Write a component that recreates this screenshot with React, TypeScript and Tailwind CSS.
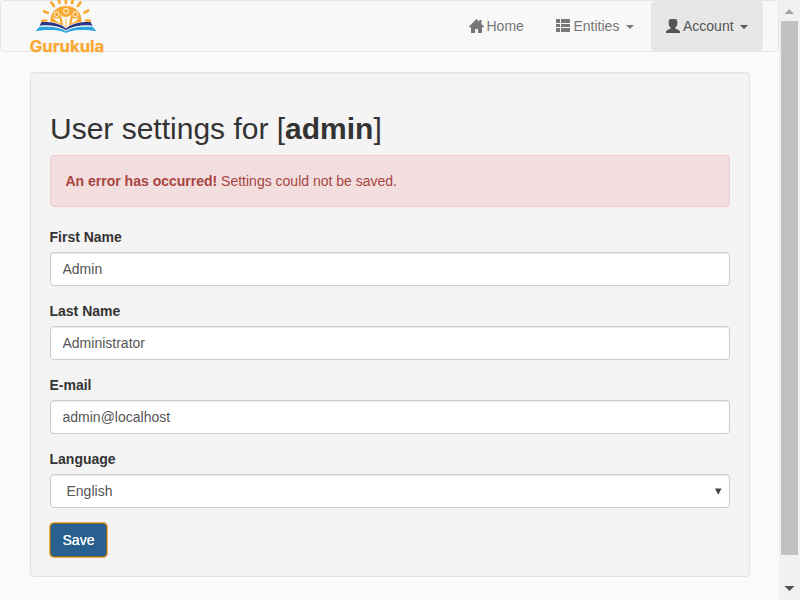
import React from "react";

function Logo() {
  return (
    <svg className="block h-[60px] w-[100px]" viewBox="0 0 100 60">
      <path d="M30.5 22.2 C30 12 37 6 46 6 S62 12 61.500 22.200 C56 22.200 50 24 46 28 C42 24 36 22.200 30.500 22.200Z" fill="#f9a832" />
      <g stroke="#f9a832" strokeWidth="2.600" strokeLinecap="round">
        <path d="M22.300 20.800L26.300 20.500M24 11.300L27.800 13M31.300 2.500L34 6M38.500 -1L39.700 3M45.800 -1V3.300M53.300 -1L52 3M60.500 2.500L57.800 6M68.300 10.500L64.500 12.700M70 20.700L66 20.500" />
      </g>
      <g fill="#fdf8ee">
        <path d="M40.500 14.500Q43 17 46 17Q49 17 51.500 14.500L50 19L49 25.500L46 28.500L43 25.500L42 19Z" />
        <path d="M32.500 16.500Q36 19.500 39.500 18L40.500 23.500L36.500 21.500ZM59.500 16.500Q56 19.500 52.500 18L51.500 23.500L55.500 21.500Z" />
      </g>
      <g fill="#f9a832" stroke="#fdf8ee" strokeWidth="1">
        <circle cx="46" cy="11" r="2.500" />
        <circle cx="36.700" cy="14.200" r="2.500" />
        <circle cx="55.300" cy="14.200" r="2.500" />
      </g>
      <path d="M46 19V28" fill="none" stroke="#f9a832" strokeWidth=".9" />
      <path d="M21.500 22 C31 21.800 41 23.500 46 28.700 C51 23.500 61 21.800 70.500 22 L72.500 25.700 C62 24.800 52 26.500 46 30.700 C40 26.500 30 24.800 19.500 25.700Z" fill="#2b3585" />
      <path d="M19.500 26.700 C31 25.800 41 27.600 46 31 C51 27.600 61 25.800 72.500 26.700 L76.500 31.300 C65 29.400 54 29.800 48.500 32 Q46 33.300 43.500 32 C38 29.800 27 29.400 15.500 31.300Z" fill="#2ba3dc" />
      <path d="M21 26.200 C32 25.300 41 27 46 30.900 C51 27 60 25.300 71 26.200" fill="none" stroke="#fff" strokeWidth=".9" />
      <text x="9.800" y="52" textLength="74.500" lengthAdjust="spacingAndGlyphs" fontSize="15.500" fontWeight="700" fill="#f9a832" stroke="#f9a832" strokeWidth=".25" className="font-['Inter',sans-serif]">Gurukula</text>
    </svg>
  );
}

function HomeIcon() {
  return (
    <svg className="h-[14px] w-[15px]" viewBox="0 0 15 14" fill="currentColor">
      <path d="M7.500 0L10.300 2.800V1H12.500V5L15 7.500V8.300H13V14H9V10H6.200V14H2V8.300H0V7.500Z" />
    </svg>
  );
}

function ListIcon() {
  return (
    <svg className="h-[14px] w-[14px]" viewBox="0 0 14 14" fill="currentColor">
      <path d="M.5 0H4V4H0V.500ZM5 0H13.500L14 .500V4H5ZM0 5H4V8H0ZM5 5H14V8H5ZM0 9H4V13H.5L0 12.500ZM5 9H14V12.500L13.500 13H5Z" />
    </svg>
  );
}

function UserIcon() {
  return (
    <svg className="h-[14px] w-[14px]" viewBox="0 0 14 14" fill="currentColor">
      <path d="M5 0H9Q11.300 0 11.300 2.200V5C11.300 6.500 10.300 8 9.200 8.700V9.500L12.500 11Q14 11.600 14 12.500V14H0V12.500Q0 11.600 1.500 11L4.800 9.500V8.700C3.700 8 2.700 6.500 2.700 5V2.200Q2.700 0 5 0Z" />
    </svg>
  );
}

function Caret() {
  return <span className="ml-[6.5px] mt-px border-x-4 border-t-4 border-x-transparent border-t-current" />;
}

const inputClass =
  "block h-[34px] w-full rounded-[4px] border border-[#ccc] bg-white pl-[11.5px] pr-3 text-sm leading-5 text-[#555] shadow-[inset_0_1px_1px_rgba(0,0,0,0.075)] outline-none";

function Field({ label, value }: { label: string; value: string }) {
  return (
    <label className="mb-[15px] block">
      <span className="-ml-[0.5px] mb-[5px] block font-bold leading-5">{label}</span>
      <input className={inputClass} defaultValue={value} />
    </label>
  );
}

function Navbar() {
  return (
    <nav className="flex h-[52px] w-[779px] rounded-[4px] border border-[#e7e7e7] bg-[#f8f8f8] text-[#777]">
      <div className="-mt-px ml-[19px] h-[60px] w-[100px] shrink-0"><Logo /></div>
      <div className="ml-auto mr-[15px] flex h-[50px]">
        <a className="flex w-[87px] items-center pl-[15px]"><HomeIcon /><span className="ml-[2.5px]">Home</span></a>
        <a className="flex w-[110px] items-center pl-[15px]"><ListIcon /><span className="ml-[3.5px]">Entities</span><Caret /></a>
        <a className="flex w-[112px] items-center rounded-[4px] bg-[#e7e7e7] pl-[15px] text-[#555]"><UserIcon /><span className="ml-[3px]">Account</span><Caret /></a>
      </div>
    </nav>
  );
}

function Scrollbar() {
  return (
    <div className="flex h-[600px] w-[21px] shrink-0 flex-col items-center justify-between bg-[#f1f1f1]">
      <svg className="h-[21px] w-[21px] shrink-0" viewBox="0 0 21 21"><path d="M5.500 14L10.200 9L15 14Z" fill="#a3a3a3" /></svg>
      <div className="h-[534px] w-[17px] shrink-0 bg-[#c1c1c1]" />
      <div className="flex h-[45px] items-end"><svg className="h-[21px] w-[21px]" viewBox="0 0 21 21"><path d="M5.500 7H15.500L10.500 12Z" fill="#505050" /></svg></div>
    </div>
  );
}

export default function App() {
  return (
    <div className="flex h-[600px] w-[800px] overflow-hidden bg-[#fafafa] font-['Liberation_Sans',Arial,sans-serif] text-sm leading-5 text-[#333]">
      <div className="w-[779px]">
        <Navbar />
        <main className="ml-[30px] mt-5 h-[505px] w-[720px] rounded-[4px] border border-[#e3e3e3] bg-[#f4f4f4] p-[19px] shadow-[inset_0_1px_1px_rgba(0,0,0,0.05)]">
          <h2 className="mb-[10px] mt-5 text-[30px] font-normal leading-[33px]">User settings for [<b>admin</b>]</h2>
          <div className="mb-5 h-[52px] rounded-[4px] border border-[#ebccd1] bg-[#f2dede] px-[14.5px] py-[15px] text-[#a94442]">
            <strong>An error has occurred!</strong> Settings could not be saved.
          </div>
          <form>
            <Field label="First Name" value="Admin" />
            <Field label="Last Name" value="Administrator" />
            <Field label="E-mail" value="admin@localhost" />
            <div className="mb-[15px]">
              <label className="-ml-[0.5px] mb-[5px] block font-bold">Language</label>
              <button type="button" className={inputClass}>
                <span className="flex items-center justify-between pl-1">
                  English
                  <svg className="-mr-[5px] h-[7px] w-[8px]" viewBox="0 0 8 7"><path d="M1 0.500H7.500L4.250 6.800Z" fill="#444" /></svg>
                </span>
              </button>
            </div>
            <button type="button" className="h-[34px] w-[57px] rounded-[4px] border border-[#816b31] bg-[#286090] text-white shadow-[0_0_0_1px_#efb04d] [text-shadow:0_0_0.5px_#fff]">Save</button>
          </form>
        </main>
      </div>
      <Scrollbar />
    </div>
  );
}
